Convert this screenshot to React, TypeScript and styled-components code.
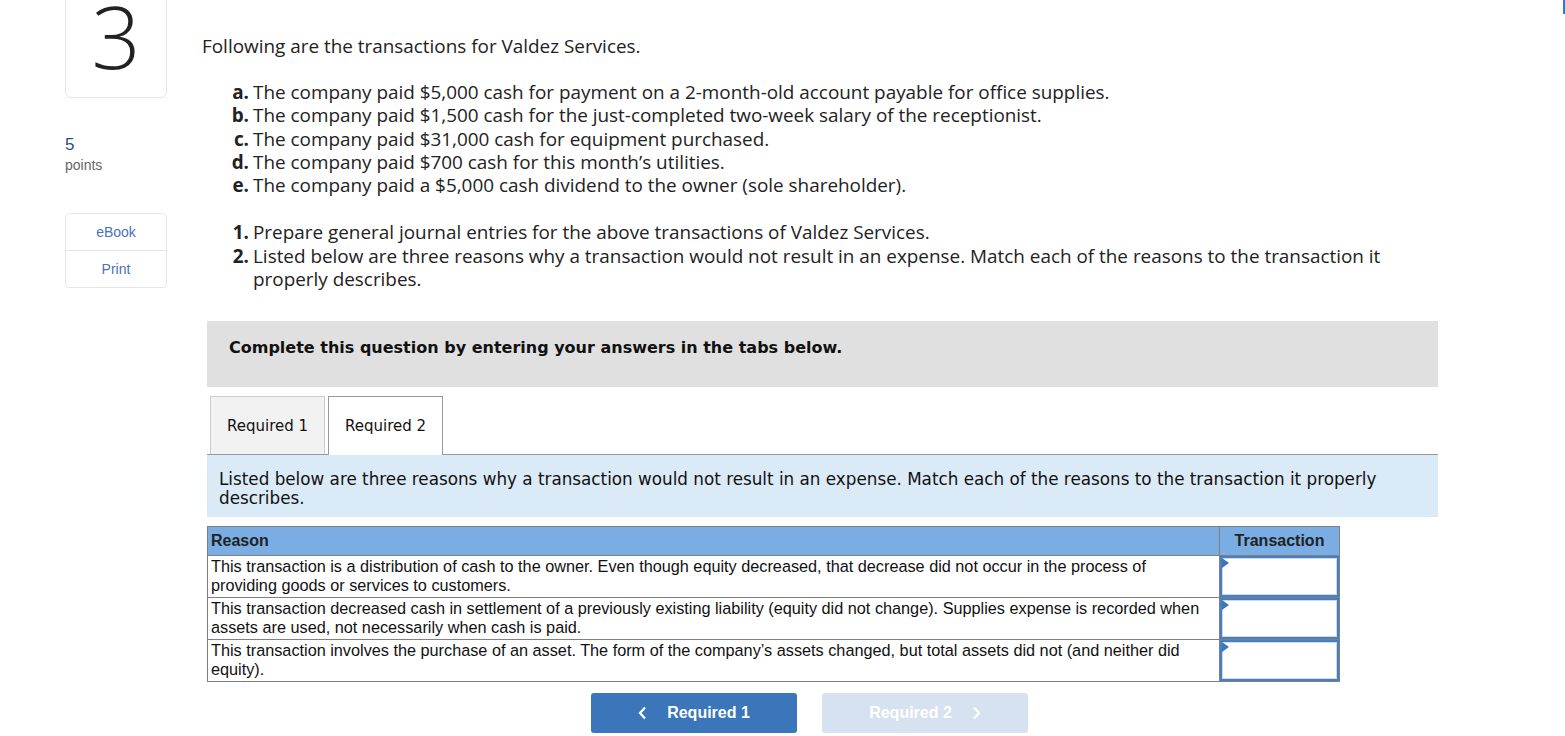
import React from 'react';
import styled, { createGlobalStyle } from 'styled-components';

const GlobalStyle = createGlobalStyle`
  html, body {
    margin: 0;
    padding: 0;
    background: #fff;
  }
  body {
    font-family: "Open Sans", Lato, sans-serif;
    color: #222;
  }
`;

const Page = styled.div`
  display: flex;
  align-items: flex-start;
  padding-left: 65px;
  width: 1565px;
  box-sizing: border-box;
  height: 736px;
  overflow: hidden;
  position: relative;
`;

const EdgeMark = styled.div`
  position: absolute;
  right: 0;
  top: 0;
  width: 2px;
  height: 14px;
  background: #3b76b9;
`;

const Side = styled.aside`
  width: 102px;
  flex-shrink: 0;
  display: flex;
  flex-direction: column;
`;

const NumberBox = styled.div`
  margin-top: -30px;
  height: 128px;
  border: 1px solid #e6e6e6;
  border-radius: 0 0 6px 6px;
  box-sizing: border-box;
  display: flex;
  justify-content: center;
  align-items: flex-end;
  font-family: "Open Sans", sans-serif;
  font-weight: 300;
  font-size: 86px;
  line-height: 1;
  color: #222;
  padding-bottom: 18px;
`;

const Points = styled.div`
  margin-top: 37px;
  display: flex;
  flex-direction: column;
  font-family: "Liberation Sans", Arial, sans-serif;
`;

const PointsValue = styled.span`
  font-size: 17px;
  color: #1f4f8f;
  line-height: 20px;
`;

const PointsLabel = styled.span`
  font-size: 14px;
  color: #666;
  line-height: 20px;
`;

const Tools = styled.div`
  margin-top: 38px;
  border: 1px solid #e6e6e6;
  border-radius: 4px;
  display: flex;
  flex-direction: column;
`;

const ToolLink = styled.div<{ $last?: boolean }>`
  height: 36px;
  display: flex;
  align-items: center;
  justify-content: center;
  font-family: "Liberation Sans", Arial, sans-serif;
  font-size: 14px;
  color: #4a72b8;
  border-bottom: ${(p) => (p.$last ? 'none' : '1px solid #e6e6e6')};
`;

const Main = styled.main`
  margin-left: 35px;
  width: 1236px;
  padding-top: 34px;
`;

const Intro = styled.p`
  margin: 0;
  font-size: 18.9px;
  line-height: 24px;
`;

const List = styled.ol`
  list-style: none;
  margin: 0;
  padding: 0 0 0 28px;
  font-size: 18.9px;
  line-height: 23.3px;
`;

const Item = styled.li`
  display: flex;
`;

const Mark = styled.b`
  flex-shrink: 0;
  width: 23px;
  padding-right: 4px;
  box-sizing: border-box;
  text-align: right;
  font-weight: 700;
`;

const Tasks = styled(List)`
  margin-top: 24px;
`;

const Facts = styled(List)`
  margin-top: 23px;
`;

const Prompt = styled.div`
  margin: 30px 0 0 5px;
  height: 66px;
  box-sizing: border-box;
  background: #e0e0e0;
  padding: 17px 0 0 22px;
  font-family: "DejaVu Sans", Verdana, sans-serif;
  font-weight: 700;
  font-size: 16px;
  line-height: 20px;
  color: #111;
`;

const TabBar = styled.div`
  margin: 9px 0 0 5px;
  display: flex;
  gap: 3px;
  padding-left: 3px;
  border-bottom: 1px solid #999;
`;

const Tab = styled.div<{ $active?: boolean }>`
  padding: 0 16px;
  box-sizing: border-box;
  display: flex;
  align-items: center;
  font-family: "DejaVu Sans", Verdana, sans-serif;
  font-size: 15px;
  color: #111;
  background: ${(p) => (p.$active ? '#fff' : '#f2f2f2')};
  border: 1px solid ${(p) => (p.$active ? '#999' : '#ccc')};
  border-bottom: none;
  margin-bottom: ${(p) => (p.$active ? '-1px' : '0')};
  height: ${(p) => (p.$active ? '59px' : '58px')};
`;

const Instructions = styled.div`
  margin-left: 5px;
  background: #dbeaf7;
  padding: 15px 12px 9px 12px;
  font-family: "DejaVu Sans", Verdana, sans-serif;
  font-size: 16.8px;
  line-height: 19px;
  color: #111;
`;

const Table = styled.table`
  margin: 9px 0 0 5px;
  width: 1133px;
  border-collapse: collapse;
  font-family: "Liberation Sans", Arial, sans-serif;
  font-size: 16.25px;
  color: #111;
`;

const Head = styled.th<{ $center?: boolean }>`
  background: #79ade3;
  border: 1px solid #808080;
  height: 28px;
  padding: 0 3px;
  text-align: ${(p) => (p.$center ? 'center' : 'left')};
  font-weight: 700;
  font-size: 16px;
  color: #222;
`;

const Cell = styled.td`
  border: 1px solid #808080;
  padding: 1px 3px 2px;
  line-height: 19px;
  vertical-align: top;
`;

const PickCell = styled.td`
  border: 1px solid #808080;
  width: 119px;
  padding: 0;
  vertical-align: top;
`;

const Pick = styled.div`
  position: relative;
  height: 37px;
  border: 2px solid #4a7fbf;
  box-shadow: inset 0 0 0 1px #c9dbf0;
  background: #fff;
  &::before {
    content: '';
    position: absolute;
    left: 0;
    top: 0;
    border-top: 5px solid transparent;
    border-bottom: 5px solid transparent;
    border-left: 7px solid #3b76b9;
  }
`;

const Nav = styled.div`
  margin-top: 11px;
  display: flex;
  gap: 25px;
  padding-left: 389px;
`;

const NavButton = styled.button<{ $off?: boolean }>`
  width: 206px;
  height: 40px;
  border: none;
  border-radius: 3px;
  background: ${(p) => (p.$off ? '#d6e2f0' : '#3a76b9')};
  color: #fff;
  font-family: "Liberation Sans", Arial, sans-serif;
  font-weight: 700;
  font-size: 16px;
  display: flex;
  align-items: center;
  justify-content: center;
  gap: 20px;
`;

const Chevron = ({ dir }: { dir: 'left' | 'right' }) => (
  <svg width="9" height="14" viewBox="0 0 9 14">
    <path
      d={dir === 'left' ? 'M7 1.5 L2 7 L7 12.5' : 'M2 1.5 L7 7 L2 12.5'}
      fill="none"
      stroke="#fff"
      strokeWidth="2.2"
    />
  </svg>
);

const facts = [
  ['a.', 'The company paid $5,000 cash for payment on a 2-month-old account payable for office supplies.'],
  ['b.', 'The company paid $1,500 cash for the just-completed two-week salary of the receptionist.'],
  ['c.', 'The company paid $31,000 cash for equipment purchased.'],
  ['d.', 'The company paid $700 cash for this month\u2019s utilities.'],
  ['e.', 'The company paid a $5,000 cash dividend to the owner (sole shareholder).'],
];

const tasks = [
  ['1.', 'Prepare general journal entries for the above transactions of Valdez Services.'],
  ['2.', 'Listed below are three reasons why a transaction would not result in an expense. Match each of the reasons to the transaction it properly describes.'],
];

const reasons = [
  'This transaction is a distribution of cash to the owner. Even though equity decreased, that decrease did not occur in the process of providing goods or services to customers.',
  'This transaction decreased cash in settlement of a previously existing liability (equity did not change). Supplies expense is recorded when assets are used, not necessarily when cash is paid.',
  'This transaction involves the purchase of an asset. The form of the company\u2019s assets changed, but total assets did not (and neither did equity).',
];

const App: React.FC = () => (
  <>
    <GlobalStyle />
    <Page>
      <EdgeMark />
      <Side>
        <NumberBox>3</NumberBox>
        <Points>
          <PointsValue>5</PointsValue>
          <PointsLabel>points</PointsLabel>
        </Points>
        <Tools>
          <ToolLink>eBook</ToolLink>
          <ToolLink $last>Print</ToolLink>
        </Tools>
      </Side>
      <Main>
        <Intro>Following are the transactions for Valdez Services.</Intro>
        <Facts>
          {facts.map(([m, t]) => (
            <Item key={m}>
              <Mark>{m}</Mark>
              <span>{t}</span>
            </Item>
          ))}
        </Facts>
        <Tasks>
          {tasks.map(([m, t]) => (
            <Item key={m}>
              <Mark>{m}</Mark>
              <span>{t}</span>
            </Item>
          ))}
        </Tasks>
        <Prompt>Complete this question by entering your answers in the tabs below.</Prompt>
        <TabBar>
          <Tab>Required 1</Tab>
          <Tab $active>Required 2</Tab>
        </TabBar>
        <Instructions>
          Listed below are three reasons why a transaction would not result in an expense. Match each of the
          reasons to the transaction it properly describes.
        </Instructions>
        <Table>
          <thead>
            <tr>
              <Head>Reason</Head>
              <Head $center>Transaction</Head>
            </tr>
          </thead>
          <tbody>
            {reasons.map((r) => (
              <tr key={r}>
                <Cell>{r}</Cell>
                <PickCell>
                  <Pick />
                </PickCell>
              </tr>
            ))}
          </tbody>
        </Table>
        <Nav>
          <NavButton>
            <Chevron dir="left" />
            Required 1
          </NavButton>
          <NavButton $off>
            Required 2
            <Chevron dir="right" />
          </NavButton>
        </Nav>
      </Main>
    </Page>
  </>
);

export default App;
